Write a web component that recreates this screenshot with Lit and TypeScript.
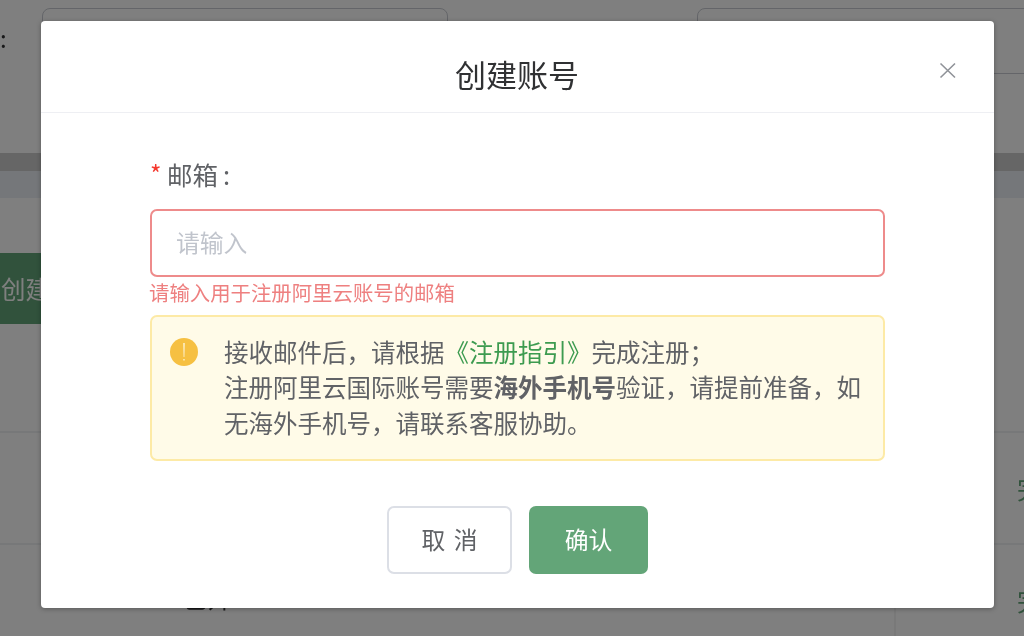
import { LitElement, html, css } from "lit";
import { customElement } from "lit/decorators.js";

@customElement("app-root")
export class AppRoot extends LitElement {
  static styles = css`
    :host {
      display: block;
      position: relative;
      width: 1024px;
      height: 636px;
      overflow: hidden;
      background: #fff;
      font-family: "Noto Sans CJK SC", "Liberation Sans", sans-serif;
      color: #606266;
      font-size: 24.5px;
      filter: blur(0.35px);
    }
    .page { display: flex; flex-direction: column; height: 636px; overflow: hidden; }
    .filters { flex: none; height: 145px; padding-top: 8px; display: flex; color: #303133; }
    .colon { flex: none; width: 42px; height: 66px; line-height: 60px; font-size: 24px; }
    .box { flex: none; width: 406px; height: 66px; box-sizing: border-box; border: 1.5px solid #c8cbd2; border-radius: 8px; }
    .box + .box { margin-left: 249px; }
    .band { flex: none; height: 18px; background: #ccc; }
    .strip { flex: none; height: 27px; background: #eaeef4; }
    .toolbar { flex: none; height: 233px; box-sizing: border-box; padding-top: 55px; }
    .create { width: 120px; height: 71px; line-height: 71px; padding-left: 1px; box-sizing: border-box; background: #63a578; color: #fff; }
    .row { flex: none; height: 112px; box-sizing: border-box; border-top: 2px solid #eff0f3; display: flex; align-items: center; }
    .row .name { flex: none; width: 894px; padding: 0 0 6px 183px; box-sizing: border-box; color: #303133; }
    .row .act { flex: none; align-self: stretch; display: flex; align-items: center; padding: 0 0 0 121px; color: #63a578; white-space: nowrap; border-left: 2px solid #f2f2f2; }

    .mask { position: absolute; inset: 0; background: rgba(0, 0, 0, 0.5); display: flex; align-items: flex-start; }
    .modal {
      margin: 21px 0 0 41px;
      width: 953px;
      height: 587px;
      background: #fff;
      border-radius: 4px;
      box-shadow: 0 1px 5px rgba(0, 0, 0, 0.3);
      display: flex;
      flex-direction: column;
    }
    .head {
      flex: none;
      height: 92px;
      box-sizing: border-box;
      border-bottom: 1.5px solid #eeeff3;
      position: relative;
      display: flex;
      align-items: center;
      justify-content: center;
    }
    .title { font-size: 31px; color: #303133; line-height: 46px; margin: 14px 0 0 -1px; }
    .close { position: absolute; left: 898px; top: 41px; width: 18px; height: 18px; }
    .close svg { display: block; }
    .body { flex: 1; padding: 41px 109px 0 109px; display: flex; flex-direction: column; }
    .label { height: 40px; line-height: 40px; display: flex; align-items: center; font-size: 25.5px; }
    .star { color: #f5392f; width: 17px; font-size: 24.5px; }
    .lab-colon { margin-left: 5px; }
    .input {
      margin-top: 15px;
      display: block;
      width: 735px;
      height: 68px;
      box-sizing: border-box;
      border: 2px solid #ee8b8b;
      border-radius: 7px;
      padding: 0 24px 3px;
      font: inherit;
      font-size: 23.8px;
      outline: none;
      background: #fff;
    }
    .input::placeholder { color: #c0c4cc; opacity: 1; }
    .error { font-size: 20.4px; color: #ee8080; height: 33px; line-height: 30px; margin-left: -1px; }
    .notice {
      margin-top: 5px;
      width: 735px;
      height: 146px;
      box-sizing: border-box;
      background: #fffbe8;
      border: 2px solid #fdeaa6;
      border-radius: 7px;
      padding: 16px 20px 0 18px;
      display: flex;
    }
    .ic { flex: none; width: 28px; height: 28px; margin: 5px 26px 0 0; display: block; }
    .msg { line-height: 35.4px; font-size: 24.5px; color: #606266; padding-top: 1px; }
    .msg a { color: #3d9b50; text-decoration: none; }
    .msg b { font-weight: 700; }
    .foot { margin-top: 45px; display: flex; justify-content: center; gap: 17px; }
    .btn {
      height: 68px;
      box-sizing: border-box;
      border-radius: 7px;
      display: flex;
      align-items: center;
      justify-content: center;
      font-size: 23.8px;
      font-family: inherit;
      padding-bottom: 4px;
    }
    .cancel { width: 125px; border: 2px solid #dcdfe6; background: #fff; color: #606266; word-spacing: 3px; }
    .ok { width: 119px; background: #63a578; color: #fff; }
  `;

  render() {
    return html`
      <div class="page">
        <div class="filters">
          <div class="colon">:</div>
          <div class="box"></div>
          <div class="box"></div>
        </div>
        <div class="band"></div>
        <div class="strip"></div>
        <div class="toolbar"><div class="create">创建账号</div></div>
        <div class="row"><div class="name">已开</div><div class="act">完成</div></div>
        <div class="row"><div class="name">已开</div><div class="act">完成</div></div>
      </div>
      <div class="mask">
        <div class="modal">
          <div class="head">
            <div class="title">创建账号</div>
            <div class="close">
              <svg width="18" height="18" viewBox="0 0 18 18" fill="none" stroke="#909399" stroke-width="1.6">
                <path d="M1.5 1.5 L16 15.5 M16 1.5 L1.5 15.5"></path>
              </svg>
            </div>
          </div>
          <div class="body">
            <div class="label"><span class="star">*</span><span>邮箱</span><span class="lab-colon">:</span></div>
            <input class="input" placeholder="请输入" />
            <div class="error">请输入用于注册阿里云账号的邮箱</div>
            <div class="notice">
              <svg class="ic" viewBox="0 0 28 28">
                <circle cx="14" cy="14" r="14" fill="#f6c042"></circle>
                <path d="M13.2 5 H14.8 L14.4 19 H13.6 Z M13.3 21 H14.7 V22.6 H13.3 Z" fill="#fdf1cf"></path>
              </svg>
              <div class="msg">接收邮件后，请根据<a>《注册指引》</a>完成注册；<br />注册阿里云国际账号需要<b>海外手机号</b>验证，请提前准备，如无海外手机号，请联系客服协助。</div>
            </div>
            <div class="foot">
              <div class="btn cancel">取 消</div>
              <div class="btn ok">确认</div>
            </div>
          </div>
        </div>
      </div>
    `;
  }
}
